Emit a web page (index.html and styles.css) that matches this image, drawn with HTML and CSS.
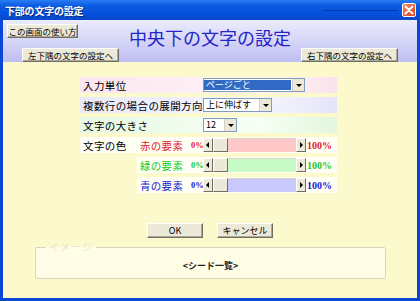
FILE: index.html
```html
<!DOCTYPE html>
<html lang="ja">
<head>
    <meta charset="UTF-8">
    <title>下部の文字の設定</title>
    <link rel="stylesheet" href="styles.css">
</head>
<body>
    <div class="window">
        <div class="titlebar">
            <span class="title">下部の文字の設定</span>
            <span class="title-line"></span>
            <span class="close">
                <svg width="10" height="10" viewBox="0 0 10 10">
                    <path d="M1.5 1.5 L8.5 8.5 M8.5 1.5 L1.5 8.5" stroke="#fff" stroke-width="2" stroke-linecap="round"/>
                </svg>
            </span>
        </div>

        <div class="header">
            <button class="btn help">この画面の使い方</button>
            <h1>中央下の文字の設定</h1>
            <button class="btn nav nav-left">左下隅の文字の設定へ</button>
            <button class="btn nav nav-right">右下隅の文字の設定へ</button>
        </div>

        <div class="body">
            <div class="form">
                <div class="row pink">
                    <span class="label">入力単位</span>
                    <span class="combo w102 selected"><span class="value">ページごと</span><span class="arrow"></span></span>
                </div>
                <div class="row lavender">
                    <span class="label">複数行の場合の展開方向</span>
                    <span class="combo w69"><span class="value">上に伸ばす</span><span class="arrow"></span></span>
                </div>
                <div class="row mint">
                    <span class="label">文字の大きさ</span>
                    <span class="combo w34"><span class="value">12</span><span class="arrow"></span></span>
                </div>

                <div class="row plain red">
                    <span class="label short">文字の色</span>
                    <span class="sub">赤の要素</span>
                    <span class="pct">0%</span>
                    <span class="scroll"><span class="sbtn left"></span><span class="thumb"></span><span class="track"></span><span class="sbtn right"></span></span>
                    <span class="pct max">100%</span>
                </div>
                <div class="row plain green indent">
                    <span class="sub">緑の要素</span>
                    <span class="pct">0%</span>
                    <span class="scroll"><span class="sbtn left"></span><span class="thumb"></span><span class="track"></span><span class="sbtn right"></span></span>
                    <span class="pct max">100%</span>
                </div>
                <div class="row plain blue indent">
                    <span class="sub">青の要素</span>
                    <span class="pct">0%</span>
                    <span class="scroll"><span class="sbtn left"></span><span class="thumb"></span><span class="track"></span><span class="sbtn right"></span></span>
                    <span class="pct max">100%</span>
                </div>
            </div>

            <div class="actions">
                <button class="btn action">OK</button>
                <button class="btn action">キャンセル</button>
            </div>

            <fieldset class="image">
                <legend>イメージ</legend>
                <div class="sample">&lt;シード一覧&gt;</div>
            </fieldset>
        </div>
    </div>
</body>
</html>
```

FILE: styles.css
```css
* {
    box-sizing: border-box;
}
body {
    margin: 0;
    font-family: "Noto Sans CJK JP", "Liberation Sans", sans-serif;
    color: #000;
}
.window {
    width: 420px;
    height: 301px;
    display: flex;
    flex-direction: column;
    border: 3px solid #0b46d6;
    border-top: none;
    background: #fcf9cd;
}
.titlebar {
    height: 20px;
    margin: 0 -3px;
    padding: 0 4px 0 5px;
    display: flex;
    align-items: center;
    background: linear-gradient(to bottom, #2a7cf4 0%, #0a5ae0 30%, #0550dc 70%, #0a48c8 100%);
}
.title {
    color: #fff;
    font-size: 10px;
    font-weight: bold;
    letter-spacing: -0.2px;
    text-shadow: 1px 1px 0 #0a2a80;
}
.title-line {
    flex: 1;
    height: 1px;
    margin: 0 4px 0 240px;
    background: #0038b0;
}
.close {
    width: 14px;
    height: 14px;
    display: flex;
    align-items: center;
    justify-content: center;
    border: 1px solid #fff;
    border-radius: 2px;
    background: linear-gradient(to bottom right, #f08a60, #d84418);
}
.header {
    height: 42px;
    display: grid;
    grid-template-columns: 1fr auto 1fr;
    grid-template-rows: 28px 14px;
    background: linear-gradient(to bottom, #ececfc, #bebef2);
}
.btn {
    height: 14px;
    padding: 0;
    font-family: "Noto Sans CJK JP", "Liberation Sans", sans-serif;
    font-size: 8.5px;
    line-height: 12px;
    color: #000;
    background: #ece9d8;
    border: 1px solid;
    border-color: #fff #716f64 #716f64 #fff;
    box-shadow: inset -1px -1px 0 #aca899;
}
.help {
    grid-row: 1;
    grid-column: 1;
    justify-self: start;
    align-self: start;
    width: 71px;
    margin: 4px 0 0 4px;
}
h1 {
    grid-row: 1;
    grid-column: 2;
    margin: 5px 0 0;
    font-size: 18px;
    line-height: 24px;
    font-weight: normal;
    color: #2424c8;
}
.nav {
    grid-row: 2;
    width: 97px;
}
.nav-left {
    grid-column: 1;
    justify-self: start;
    margin-left: 19px;
}
.nav-right {
    grid-column: 3;
    justify-self: end;
    margin-right: 19px;
}
.body {
    flex: 1;
    padding-top: 15px;
    display: flex;
    flex-direction: column;
}
.form {
    margin-left: 77px;
    width: 257px;
    display: flex;
    flex-direction: column;
    gap: 4px;
}
.row {
    height: 16px;
    display: flex;
    align-items: center;
    font-size: 10.5px;
}
.pink { background: linear-gradient(to right, #fbe6ee, #fff4f8 70%, #fbe2ea); }
.lavender { background: linear-gradient(to right, #e9e9fa, #f6f6ff 70%, #e4e4f8); }
.mint { background: linear-gradient(to right, #e8f8e4, #f6fff4 70%, #e2f6de); }
.plain { background: #fffff6; }
.indent { margin-left: 57px; }
.label {
    flex: none;
    width: 123px;
    padding-left: 3px;
    letter-spacing: 0.4px;
    white-space: nowrap;
}
.label.short {
    width: 57px;
}
.combo {
    flex: none;
    height: 14px;
    display: flex;
    border: 1px solid #7f9db9;
    background: #fff;
}
.w102 { width: 102px; }
.w69 { width: 69px; }
.w34 { width: 34px; }
.value {
    flex: 1;
    padding-left: 2px;
    font-size: 9px;
    line-height: 12px;
    white-space: nowrap;
}
.selected .value {
    margin: 1px 1px 1px 0;
    line-height: 10px;
    background: #316ac5;
    color: #fff;
}
.arrow {
    width: 12px;
    position: relative;
    background: #ece9d8;
    border-left: 1px solid #d4d0c8;
}
.arrow::after {
    content: "";
    position: absolute;
    left: 3px;
    top: 5px;
    border-left: 3px solid transparent;
    border-right: 3px solid transparent;
    border-top: 3px solid #000;
}
.sub {
    flex: none;
    width: 54px;
    padding-left: 3px;
    letter-spacing: 0.3px;
    white-space: nowrap;
}
.pct {
    flex: none;
    width: 12px;
    font-family: "Liberation Serif", serif;
    font-size: 8.5px;
    font-weight: bold;
    text-align: right;
}
.pct.max {
    width: auto;
    padding-left: 1px;
    font-size: 10px;
}
.red .sub, .red .pct { color: #e0202c; }
.green .sub, .green .pct { color: #1cc81c; }
.blue .sub, .blue .pct { color: #1a1ad0; }
.scroll {
    flex: none;
    width: 103px;
    height: 14px;
    display: flex;
}
.sbtn, .thumb {
    position: relative;
    background: #ece9d8;
    border: 1px solid;
    border-color: #fff #716f64 #716f64 #fff;
}
.sbtn {
    width: 10px;
}
.thumb {
    width: 15px;
}
.sbtn::after {
    content: "";
    position: absolute;
    top: 3px;
    border-top: 3px solid transparent;
    border-bottom: 3px solid transparent;
}
.sbtn.left::after {
    left: 2px;
    border-right: 3px solid #000;
}
.sbtn.right::after {
    left: 3px;
    border-left: 3px solid #000;
}
.track {
    flex: 1;
    border-top: 1px solid #d8d4c4;
}
.red .track { background: #ffc8c8; }
.green .track { background: #c8fac8; }
.blue .track { background: #c8c8fc; }
.actions {
    margin-top: 30px;
    display: flex;
    justify-content: center;
    gap: 14px;
}
.action {
    width: 56px;
    height: 15px;
    font-size: 9px;
}
.image {
    margin: 4px 31px 0 32px;
    padding: 0;
    height: 37px;
    border: 1px solid #d6d4c0;
    border-radius: 2px;
    background: #fffde6;
}
.image legend {
    margin-left: 10px;
    padding: 0 3px;
    font-size: 10px;
    line-height: 10px;
    color: #e6e4d4;
    letter-spacing: 1px;
}
.sample {
    padding-top: 7px;
    text-align: center;
    font-size: 9px;
    font-weight: bold;
    color: #222;
}
```
